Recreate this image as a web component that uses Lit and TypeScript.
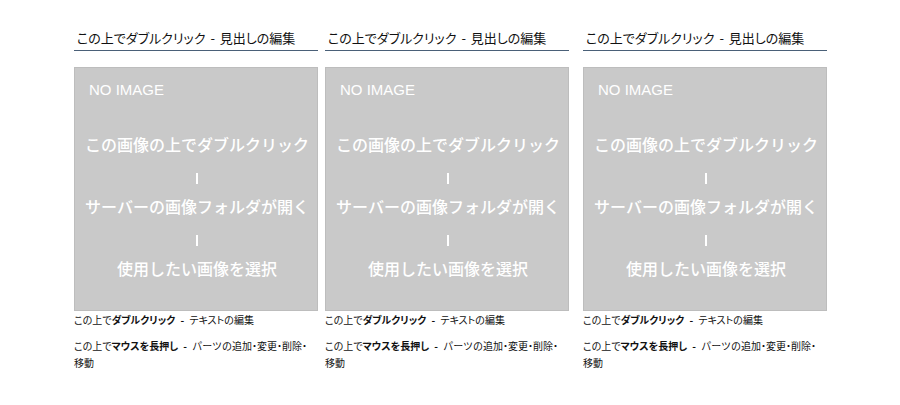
import { LitElement, html, css } from "lit";
import { customElement } from "lit/decorators.js";

@customElement("placeholder-image")
class PlaceholderImage extends LitElement {
  static styles = css`
    :host {
      display: block;
    }
    .frame {
      box-sizing: border-box;
      aspect-ratio: 1;
      padding: 6px 0 0 2px;
      border: 1px solid #bdbdbd;
      background: #c9c9c9;
      color: #fff;
      font: 500 16px/31px "Noto Sans CJK JP", sans-serif;
      text-align: center;
      white-space: nowrap;
      overflow: hidden;
    }
    .title {
      margin: 0 0 24px;
      padding-left: 12px;
      font-family: "Liberation Sans", sans-serif;
      font-size: 15px;
      text-align: left;
    }
    .line {
      margin: 0;
    }
    .tick {
      width: 2px;
      height: 11px;
      margin: 13px auto 7px;
      background: #fff;
    }
  `;

  render() {
    return html`
      <div class="frame">
        <p class="title">NO IMAGE</p>
        <p class="line">この画像の上でダブルクリック</p>
        <div class="tick"></div>
        <p class="line">サーバーの画像フォルダが開く</p>
        <div class="tick"></div>
        <p class="line">使用したい画像を選択</p>
      </div>
    `;
  }
}

@customElement("content-card")
class ContentCard extends LitElement {
  static styles = css`
    :host {
      display: block;
      min-width: 0;
    }
    .heading {
      margin: 0 0 16px;
      padding: 0 0 0 3px;
      border-bottom: 1px solid #4a6078;
      font-size: 13px;
      line-height: 24px;
      font-weight: 400;
    }
    .text {
      margin: 0 0 9px;
      font-size: 10px;
      line-height: 17px;
    }
    .strong {
      font-weight: 700;
    }
    .dash {
      margin: 0 3px;
      font-weight: 700;
    }
    .heading .dash {
      margin: 0 2px;
      font-weight: 400;
    }
    .wide {
      font-feature-settings: normal;
    }
    .word {
      white-space: nowrap;
    }
  `;

  render() {
    return html`
      <h2 class="heading">この上でダブルクリック <span class="dash">-</span> 見出しの編集</h2>
      <placeholder-image></placeholder-image>
      <p class="text">この上で<b class="strong">ダブルクリック</b> <span class="dash">-</span> テキストの編集</p>
      <p class="text">この上で<b class="strong">マウスを長押し</b> <span class="dash">-</span> <span class="wide">パーツの</span>追加・変更・削除・<span class="word">移動</span></p>
    `;
  }
}

@customElement("app-root")
class AppRoot extends LitElement {
  static styles = css`
    :host {
      display: block;
      background: #fff;
      color: #111;
      font-family: "Noto Sans CJK JP", sans-serif;
      font-feature-settings: "palt";
    }
    .columns {
      display: grid;
      grid-template-columns: 1fr 7px 1fr 14px 1fr;
      padding: 26px 73px 24px 74px;
    }
    .second {
      grid-column: 3;
    }
    .third {
      grid-column: 5;
    }
  `;

  render() {
    return html`
      <main class="columns">
        <content-card></content-card>
        <content-card class="second"></content-card>
        <content-card class="third"></content-card>
      </main>
    `;
  }
}
